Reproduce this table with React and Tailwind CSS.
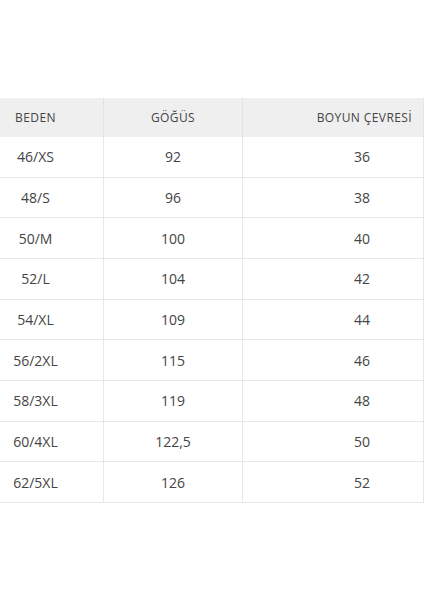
import React from 'react';

const rows = [
  ['46/XS', '92', '36'],
  ['48/S', '96', '38'],
  ['50/M', '100', '40'],
  ['52/L', '104', '42'],
  ['54/XL', '109', '44'],
  ['56/2XL', '115', '46'],
  ['58/3XL', '119', '48'],
  ['60/4XL', '122,5', '50'],
  ['62/5XL', '126', '52'],
];

const App = () => {
  return (
    <div className="w-[424px] h-[600px] bg-white overflow-hidden pt-[98px] text-[#444]" style={{ fontFamily: '"Open Sans", "DejaVu Sans", sans-serif' }}>
      <div className="-ml-[32px] w-[456px] border-r border-[#e6e6e6]">
        <div className="flex h-[39px] bg-[#efefef] text-[12px] tracking-[0.4px] uppercase">
          <div className="w-[136px] flex items-center justify-center border-r border-[#e2e2e2]">Beden</div>
          <div className="w-[139px] flex items-center justify-center border-r border-[#e2e2e2]">Göğüs</div>
          <div className="flex-1 flex items-center justify-end pr-[11px]">Boyun Çevresİ</div>
        </div>
        {rows.map((r) => (
          <div key={r[0]} className="flex h-[40.67px] border-b border-[#e8e8e8] text-[14px]">
            <div className="w-[136px] flex items-center justify-center border-r border-[#e8e8e8]">{r[0]}</div>
            <div className="w-[139px] flex items-center justify-center border-r border-[#e8e8e8]">{r[1]}</div>
            <div className="flex-1 flex items-center justify-end pr-[53px]">{r[2]}</div>
          </div>
        ))}
      </div>
    </div>
  );
};

export default App;
